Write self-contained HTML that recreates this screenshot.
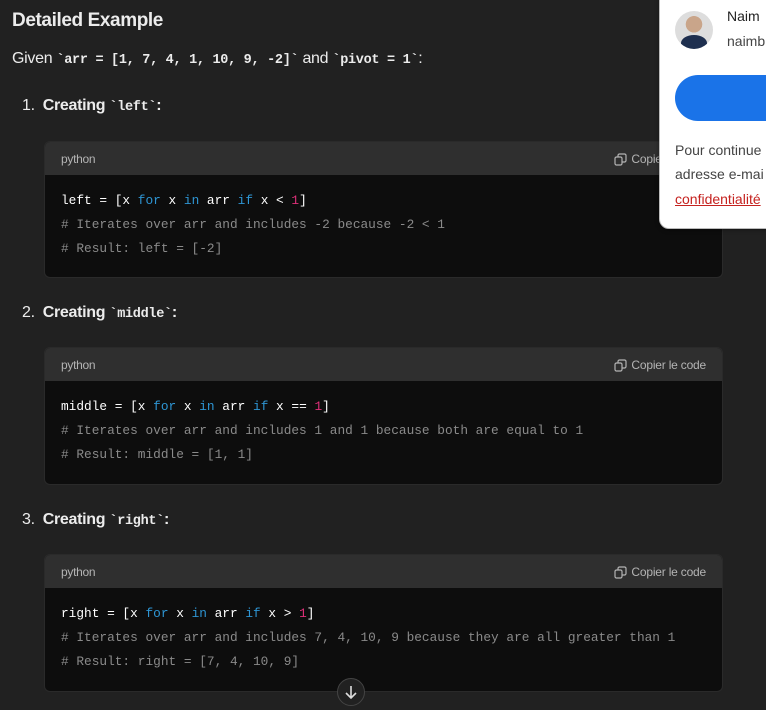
<!DOCTYPE html>
<html><head><meta charset="utf-8"><style>
*{margin:0;padding:0;box-sizing:border-box}
body{width:766px;height:709px;background:#212121;color:#ececec;font-family:"Liberation Sans",sans-serif;position:relative;overflow:hidden}
.a{position:absolute;white-space:nowrap}
h2{position:absolute;left:12px;top:10px;font-size:19px;font-weight:bold;letter-spacing:-0.4px}
.p{font-size:16px;letter-spacing:-0.3px}
code{font-family:"Liberation Mono",monospace;font-size:13.5px;font-weight:bold;letter-spacing:-0.3px}
.li{font-size:16px;font-weight:bold;letter-spacing:-0.3px}
.li .n{font-weight:normal;margin-right:8px}
.blk{position:absolute;left:44px;width:679px;border-radius:6px;overflow:hidden;background:#0d0d0d;border:1px solid #2a2a2a}
.hd{height:33px;background:#2f2f2f;position:relative;font-size:12px;color:#b4b4b4}
.hd .l{position:absolute;left:16px;top:10px;letter-spacing:-0.3px}
.hd .r{position:absolute;right:16px;top:10px;letter-spacing:-0.2px}
.hd svg{vertical-align:-3px;margin-right:4px}
.cd{padding:14px 16px;font-family:"Liberation Mono",monospace;font-size:12.8px;line-height:24px;color:#fff;white-space:pre;letter-spacing:0px}
.k{color:#2e95d3}.m{color:#df3079}.c{color:#8a8a8a}
.pop{position:absolute;left:659px;top:-10px;width:120px;height:239px;background:#fff;border-radius:10px;border:1px solid #bbb;box-shadow:0 1px 4px rgba(0,0,0,.4)}
</style></head><body>
<h2>Detailed Example</h2>
<div class="a p" style="left:12px;top:50px">Given <code>`arr = [1, 7, 4, 1, 10, 9, -2]`</code> and <code>`pivot = 1`</code>:</div>
<div class="a li" style="left:22px;top:97px"><span class="n">1.</span>Creating <code>`left`</code>:</div>
<div class="a li" style="left:22px;top:304px"><span class="n">2.</span>Creating <code>`middle`</code>:</div>
<div class="a li" style="left:22px;top:511px"><span class="n">3.</span>Creating <code>`right`</code>:</div>

<div class="blk" style="top:141px;height:137px"><div class="hd"><span class="l">python</span><span class="r"><svg width="13" height="13" viewBox="0 0 13 13" fill="none" stroke="#b4b4b4" stroke-width="1.2"><rect x="1" y="4" width="7" height="8" rx="1.5"/><path d="M4 4V2.5A1.5 1.5 0 0 1 5.5 1h5A1.5 1.5 0 0 1 12 2.5v5A1.5 1.5 0 0 1 10.5 9H8"/></svg>Copier le code</span></div>
<div class="cd">left = [x <span class="k">for</span> x <span class="k">in</span> arr <span class="k">if</span> x &lt; <span class="m">1</span>]
<span class="c"># Iterates over arr and includes -2 because -2 &lt; 1</span>
<span class="c"># Result: left = [-2]</span></div></div>

<div class="blk" style="top:347px;height:138px"><div class="hd"><span class="l">python</span><span class="r"><svg width="13" height="13" viewBox="0 0 13 13" fill="none" stroke="#b4b4b4" stroke-width="1.2"><rect x="1" y="4" width="7" height="8" rx="1.5"/><path d="M4 4V2.5A1.5 1.5 0 0 1 5.5 1h5A1.5 1.5 0 0 1 12 2.5v5A1.5 1.5 0 0 1 10.5 9H8"/></svg>Copier le code</span></div>
<div class="cd">middle = [x <span class="k">for</span> x <span class="k">in</span> arr <span class="k">if</span> x == <span class="m">1</span>]
<span class="c"># Iterates over arr and includes 1 and 1 because both are equal to 1</span>
<span class="c"># Result: middle = [1, 1]</span></div></div>

<div class="blk" style="top:554px;height:138px"><div class="hd"><span class="l">python</span><span class="r"><svg width="13" height="13" viewBox="0 0 13 13" fill="none" stroke="#b4b4b4" stroke-width="1.2"><rect x="1" y="4" width="7" height="8" rx="1.5"/><path d="M4 4V2.5A1.5 1.5 0 0 1 5.5 1h5A1.5 1.5 0 0 1 12 2.5v5A1.5 1.5 0 0 1 10.5 9H8"/></svg>Copier le code</span></div>
<div class="cd">right = [x <span class="k">for</span> x <span class="k">in</span> arr <span class="k">if</span> x &gt; <span class="m">1</span>]
<span class="c"># Iterates over arr and includes 7, 4, 10, 9 because they are all greater than 1</span>
<span class="c"># Result: right = [7, 4, 10, 9]</span></div></div>

<div class="a" style="left:337px;top:678px;width:28px;height:28px;border-radius:50%;background:#212121;border:1px solid #444"><svg width="26" height="26" viewBox="0 0 26 26" fill="none" stroke="#ddd" stroke-width="1.6"><path d="M13 7v12M8 14l5 5 5-5"/></svg></div>

<div class="pop">
<div class="a" style="left:15px;top:20px;width:38px;height:38px;border-radius:50%;background:radial-gradient(circle at 50% 35%,#c9a58a 0 26%,#ddd 27%);overflow:hidden"><div style="position:absolute;left:6px;top:24px;width:26px;height:16px;border-radius:50% 50% 0 0;background:#1e2f4f"></div></div>
<div class="a" style="left:67px;top:17px;font-size:14px;color:#222">Naim</div>
<div class="a" style="left:67px;top:42px;font-size:14px;color:#444">naimb</div>
<div class="a" style="left:15px;top:84px;width:120px;height:46px;border-radius:23px;background:#1a73e8"></div>
<div class="a" style="left:15px;top:151px;font-size:14px;color:#444">Pour continue</div>
<div class="a" style="left:15px;top:175px;font-size:14px;color:#444">adresse e-mai</div>
<div class="a" style="left:15px;top:200px;font-size:14px;color:#c5221f;text-decoration:underline">confidentialité</div>
</div>
</body></html>
